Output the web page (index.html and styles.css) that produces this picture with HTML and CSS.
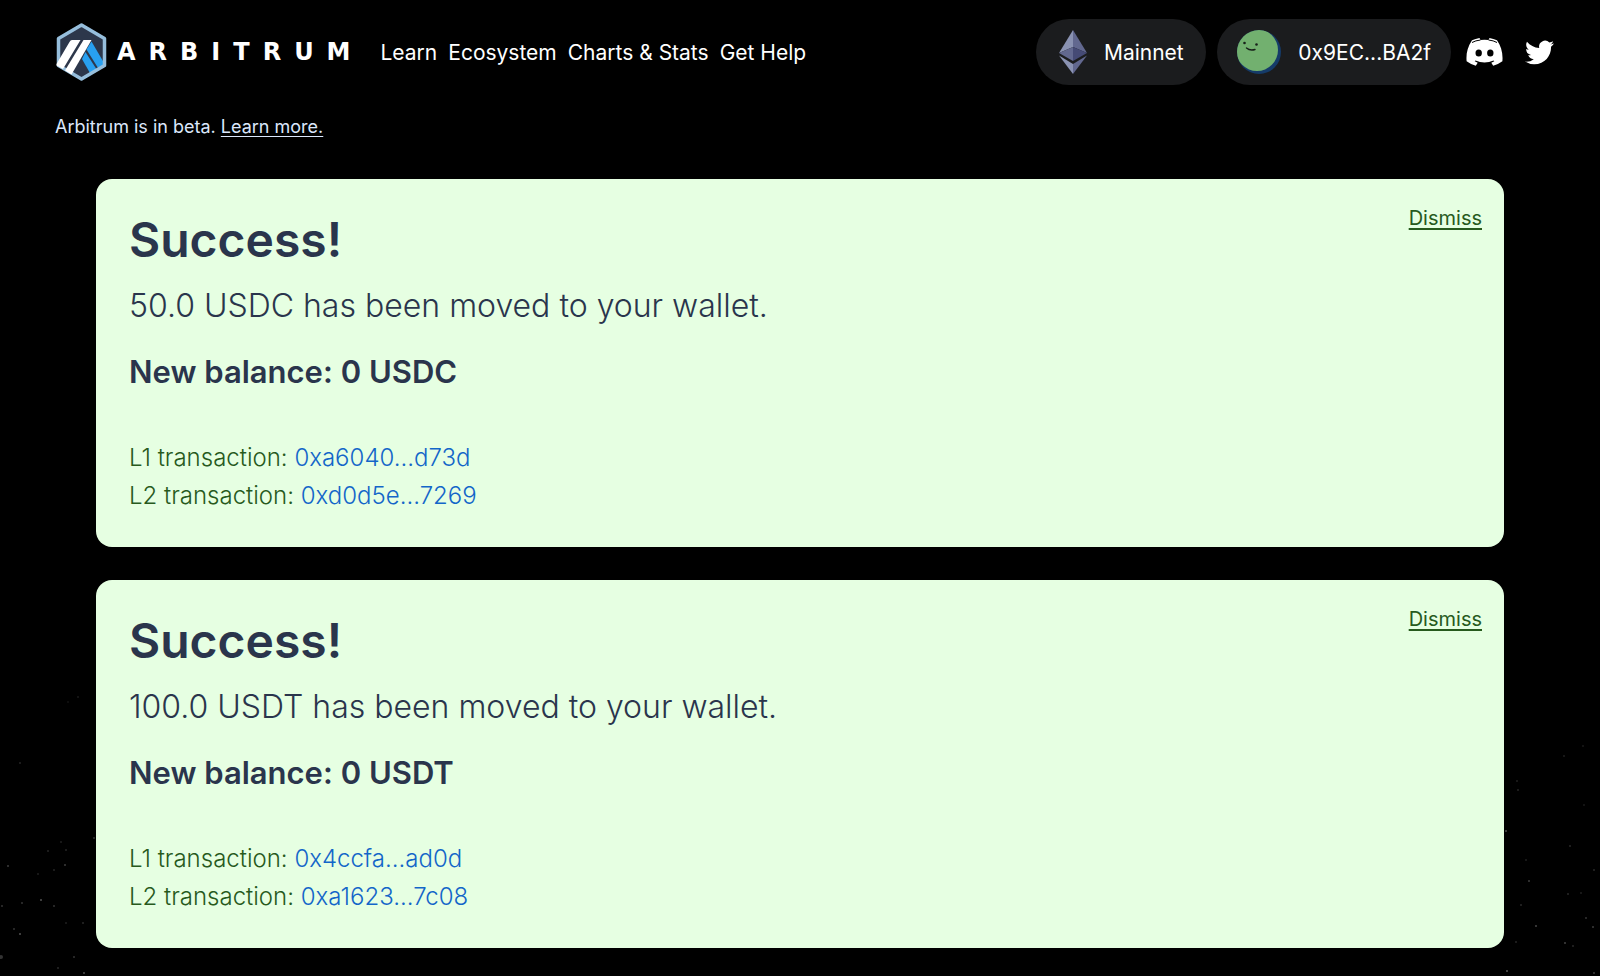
FILE: index.html
```html
<!DOCTYPE html>
<html lang="en">
<head>
<meta charset="utf-8">
<meta name="viewport" content="width=device-width, initial-scale=1">
<title>Arbitrum</title>
<link rel="stylesheet" href="styles.css">
</head>
<body>
<svg class="stars stars-left" width="110" height="300" aria-hidden="true">
  <g fill="#fff">
    <circle cx="78" cy="21" r="1" opacity=".1"/><circle cx="68" cy="26" r="1" opacity=".07"/><circle cx="20" cy="87" r="1" opacity=".14"/><circle cx="94" cy="162" r="1" opacity=".2"/><circle cx="61" cy="166" r="1" opacity=".12"/><circle cx="48" cy="175" r="1" opacity=".14"/><circle cx="66" cy="174" r="1" opacity=".14"/><circle cx="8" cy="190" r="1" opacity=".24"/><circle cx="65" cy="189" r="1" opacity=".24"/><circle cx="54" cy="194" r="1" opacity=".14"/><circle cx="38" cy="198" r="1" opacity=".12"/><circle cx="41" cy="224" r="1" opacity=".32"/><circle cx="22" cy="227" r="1" opacity=".2"/><circle cx="54" cy="230" r="1" opacity=".2"/><circle cx="2" cy="230" r="1" opacity=".2"/><circle cx="14" cy="253" r="1" opacity=".2"/><circle cx="20" cy="258" r="1" opacity=".32"/><circle cx="66" cy="247" r="1" opacity=".12"/><circle cx="83" cy="247" r="1" opacity=".16"/><circle cx="1" cy="281" r="2" opacity=".2"/><circle cx="74" cy="281" r="1" opacity=".2"/><circle cx="58" cy="292" r="1" opacity=".16"/><circle cx="84" cy="297" r="1" opacity=".3"/>
  </g>
</svg>
<svg class="stars stars-right" width="110" height="300" aria-hidden="true">
  <g fill="#fff">
    <circle cx="93" cy="70" r="1" opacity=".1"/><circle cx="74" cy="80" r="1" opacity=".12"/><circle cx="27" cy="105" r="1" opacity=".12"/><circle cx="28" cy="114" r="1" opacity=".14"/><circle cx="94" cy="129" r="1" opacity=".1"/><circle cx="16" cy="155" r="1" opacity=".3"/><circle cx="80" cy="170" r="1" opacity=".16"/><circle cx="36" cy="184" r="1" opacity=".12"/><circle cx="104" cy="194" r="1" opacity=".16"/><circle cx="39" cy="205" r="1" opacity=".24"/><circle cx="78" cy="218" r="1" opacity=".16"/><circle cx="91" cy="217" r="1" opacity=".12"/><circle cx="31" cy="229" r="1" opacity=".16"/><circle cx="96" cy="242" r="1" opacity=".2"/><circle cx="46" cy="250" r="1" opacity=".28"/><circle cx="103" cy="251" r="1" opacity=".24"/><circle cx="26" cy="266" r="1" opacity=".14"/><circle cx="75" cy="267" r="1" opacity=".26"/><circle cx="83" cy="270" r="1" opacity=".16"/><circle cx="17" cy="295" r="1" opacity=".34"/><circle cx="104" cy="297" r="1" opacity=".24"/>
  </g>
</svg>

<header class="header">
  <a class="logo" href="#" aria-label="Arbitrum home">
    <svg class="logo-mark" viewBox="0 0 50 58" aria-hidden="true">
      <path d="M25 2 48 15.500V42.500L25 56 2 42.500V15.500Z" fill="#2d374b"/>
      <path d="M35 18.500 47 39V44L42.500 46.500 30 26.500Z" fill="#28a0f0"/>
      <path d="M29 29 40.500 47 34 51 25.500 36Z" fill="#28a0f0"/>
      <path d="M25 2 48 15.500V42.500L25 56 2 42.500V15.500Z" fill="none" stroke="#96bedc" stroke-width="3.500" stroke-linejoin="round"/>
      <path d="M15.500 17H24L6.500 46 0 42.500V41L13 19Q14 17 15.500 17Z" fill="#fff"/>
      <path d="M27 17H35L15 51.500 8.500 47.500Z" fill="#fff"/>
    </svg>
    <span class="wordmark">ARBITRUM</span>
  </a>
  <nav class="nav">
    <a href="#">Learn</a>
    <a href="#">Ecosystem</a>
    <a href="#">Charts &amp; Stats</a>
    <a href="#">Get Help</a>
  </nav>
  <div class="actions">
    <button class="pill" type="button">
      <svg class="eth" viewBox="0 0 28 44" aria-hidden="true">
        <path d="M14 0 0 23 14 17Z" fill="#8a92b2"/><path d="M14 0 28 23 14 17Z" fill="#62688f"/>
        <path d="M0 23 14 17V31Z" fill="#62688f"/><path d="M28 23 14 17V31Z" fill="#454a75"/>
        <path d="M0 25.500 14 34V44Z" fill="#8a92b2"/><path d="M28 25.500 14 34V44Z" fill="#62688f"/>
      </svg>
      Mainnet
    </button>
    <button class="pill" type="button">
      <svg class="avatar" viewBox="0 0 44 44" aria-hidden="true">
        <defs><clipPath id="face"><circle cx="22" cy="22" r="22"/></clipPath></defs>
        <g clip-path="url(#face)">
          <rect width="44" height="44" fill="#153b69"/>
          <circle cx="20" cy="20" r="21" fill="#72b06f"/>
        </g>
        <circle cx="7.500" cy="13" r="1.300" fill="#18201a"/><circle cx="19.500" cy="14.500" r="1.300" fill="#18201a"/>
        <path d="M9.500 18Q13 21 18 19.500" fill="none" stroke="#18201a" stroke-width="1.400" stroke-linecap="round"/>
      </svg>
      0x9EC...BA2f
    </button>
    <div class="social">
      <a href="#" aria-label="Discord"><svg class="discord" viewBox="0 0 36 28" aria-hidden="true">
        <path fill="#fff" d="M30.500 2.300A30 30 0 0 0 23 0L22 2Q18 1.400 14 2L13 0A30 30 0 0 0 5.500 2.300C.7 9.400-.5 16.300.1 23.200A30 30 0 0 0 9.300 27.800L11.200 24.700 8.200 23.200 9 22.600Q18 26.500 27 22.600L27.800 23.200 24.800 24.700 26.700 27.800A30 30 0 0 0 35.900 23.200C36.600 15.200 34.600 8.300 30.500 2.300Z"/>
        <path fill="none" stroke="#000" d="M5.500 4.500Q9 2.500 14 2M30.500 4.500Q27 2.500 22 2"/>
        <ellipse cx="12.200" cy="15" rx="3.200" ry="3.500"/><ellipse cx="23.800" cy="15" rx="3.200" ry="3.500"/>
      </svg></a>
      <a href="#" aria-label="Twitter"><svg class="twitter" viewBox="0 2 24 20" aria-hidden="true">
        <path fill="#fff" d="M23.953 4.570a10 10 0 0 1-2.825.775 4.958 4.958 0 0 0 2.163-2.723c-.951.555-2.005.959-3.127 1.184a4.920 4.920 0 0 0-8.384 4.482C7.690 8.095 4.067 6.130 1.640 3.162a4.822 4.822 0 0 0-.666 2.475c0 1.710.870 3.213 2.188 4.096a4.904 4.904 0 0 1-2.228-.616v.060a4.923 4.923 0 0 0 3.946 4.827 4.996 4.996 0 0 1-2.212.085 4.936 4.936 0 0 0 4.604 3.417 9.867 9.867 0 0 1-6.102 2.105c-.390 0-.779-.023-1.170-.067a13.995 13.995 0 0 0 7.557 2.209c9.053 0 13.998-7.496 13.998-13.985 0-.210 0-.420-.015-.630A9.935 9.935 0 0 0 24 4.590z"/>
      </svg></a>
    </div>
  </div>
</header>

<p class="beta">Arbitrum is in beta. <a href="#">Learn more.</a></p>

<main class="cards">
  <section class="card">
    <button class="dismiss" type="button">Dismiss</button>
    <h2 class="title">Success!</h2>
    <p class="message">50.0 USDC has been moved to your wallet.</p>
    <p class="balance">New balance: 0 USDC</p>
    <div class="transactions">
      <p>L1 transaction: <a href="#">0xa6040...d73d</a></p>
      <p>L2 transaction: <a href="#">0xd0d5e...7269</a></p>
    </div>
  </section>
  <section class="card">
    <button class="dismiss" type="button">Dismiss</button>
    <h2 class="title">Success!</h2>
    <p class="message">100.0 USDT has been moved to your wallet.</p>
    <p class="balance">New balance: 0 USDT</p>
    <div class="transactions">
      <p>L1 transaction: <a href="#">0x4ccfa...ad0d</a></p>
      <p>L2 transaction: <a href="#">0xa1623...7c08</a></p>
    </div>
  </section>
</main>
</body>
</html>
```
FILE: styles.css
```css
* { box-sizing: border-box; }

body {
  position: relative;
  margin: 0;
  padding-bottom: 28px;
  background: #000;
  color: #fff;
  font-family: Inter, "Liberation Sans", sans-serif;
}

h2, p { margin: 0; }
a { color: inherit; text-decoration: none; }
button { border: 0; font: inherit; color: inherit; cursor: pointer; }
svg { display: block; }

.stars { position: absolute; bottom: 0; }
.stars-left { left: 0; }
.stars-right { right: 0; }

.header {
  display: flex;
  align-items: center;
  padding: 19px 46px 0 56px;
}

.logo { display: flex; align-items: center; gap: 10px; }
.logo-mark { width: 51px; height: 58px; }
.wordmark {
  font: 700 24px "DejaVu Sans", sans-serif;
  letter-spacing: 13px;
}

.nav { display: flex; gap: 11px; margin-left: 17px; font-size: 21px; }

.actions { display: flex; align-items: center; gap: 11px; margin-left: auto; }
.pill {
  display: flex;
  align-items: center;
  justify-content: center;
  gap: 17px;
  min-width: 170px;
  height: 66px;
  padding: 0 20px;
  border-radius: 33px;
  background: #1b1c1e;
  font-size: 21px;
}
.eth { width: 28px; height: 44px; }
.avatar { width: 44px; height: 44px; }
.social { display: flex; align-items: center; gap: 22px; margin-left: 4px; }
.discord { width: 37px; height: 28px; }
.twitter { width: 29px; height: 25px; }

.beta {
  margin: 28px 55px 0;
  color: #dbe7fb;
  font-size: 18px;
  line-height: 28px;
}
.beta a { text-decoration: underline; text-underline-offset: 3px; }

.cards {
  display: grid;
  gap: 33px;
  margin: 38px 96px 0;
}
.card {
  position: relative;
  padding: 32px 33px;
  border-radius: 16px;
  background: #e6ffe2;
  color: #2a354c;
}
.title { font-size: 48px; font-weight: 600; line-height: 58px; }
.message { margin-top: 13px; font-size: 32px; font-weight: 300; line-height: 48px; }
.balance { margin-top: 18px; font-size: 31px; font-weight: 600; line-height: 48px; }
.transactions {
  margin-top: 43px;
  color: #275a1d;
  font-size: 24px;
  font-weight: 300;
  line-height: 38px;
}
.transactions a { color: #1366c9; }
.dismiss {
  position: absolute;
  top: 25px;
  right: 22px;
  padding: 0;
  background: none;
  color: #275a1d;
  font-size: 20px;
  line-height: 28px;
  text-decoration: underline;
  text-underline-offset: 3px;
}
```
